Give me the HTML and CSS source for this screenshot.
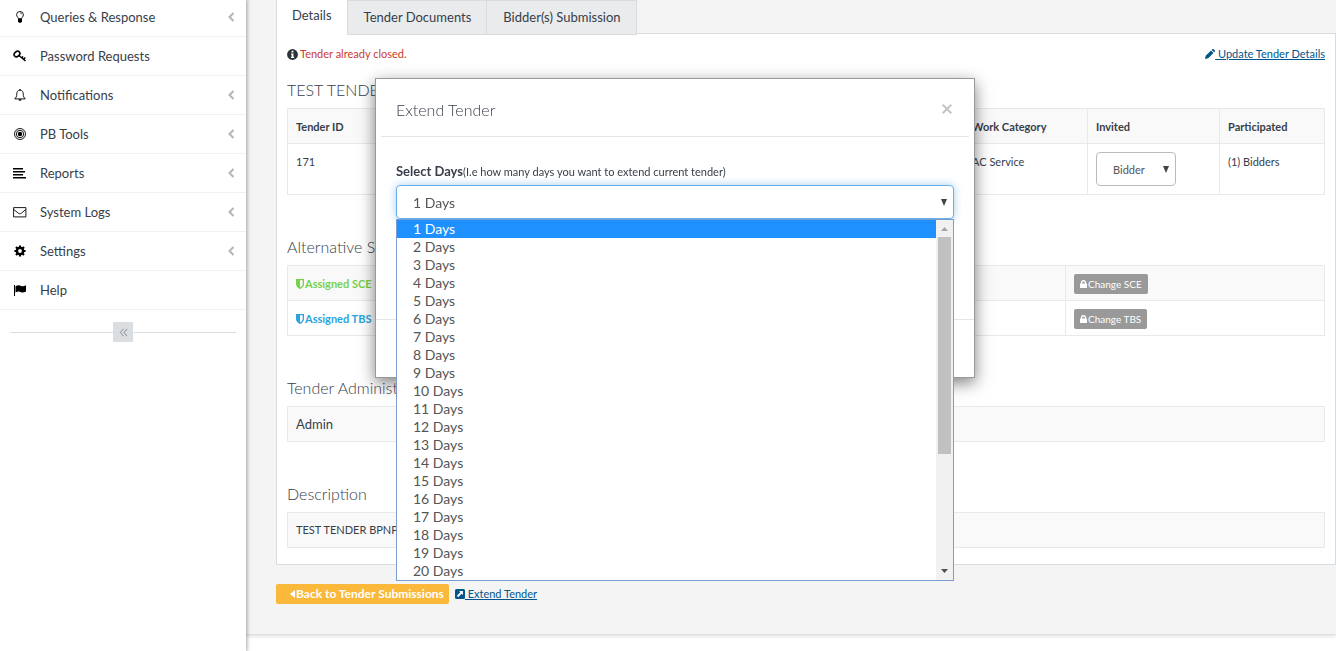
FILE: index.html
```html
<!DOCTYPE html>
<html lang="en">
<head>
<meta charset="utf-8">
<title>Tender Details</title>
<link rel="stylesheet" href="styles.css">
</head>
<body>
<div class="app">
  <nav class="sidebar" aria-label="Main">
    <ul class="menu">
      <li><a href="#"><svg class="menu-icon" viewBox="0 0 14 14"><path d="M5.300 8.600C5.300 7.400 3.600 6.700 3.600 4.700a3.400 3.200 0 0 1 6.800 0c0 2-1.700 2.700-1.700 3.900z" fill="none" stroke="#000" stroke-width=".9"/><path d="M5 9h4v2.600L8 12.800H6l-1-1.200z"/><path d="M7 3c1 0 1.700.5 1.700 1.300" fill="none" stroke="#000" stroke-width=".7"/></svg><span>Queries &amp; Response</span><svg class="chev" viewBox="0 0 8 10"><path d="M6.500 1L2.500 5l4 4"/></svg></a></li>
      <li><a href="#"><svg class="menu-icon" viewBox="0 0 14 14"><ellipse cx="4" cy="5" rx="3.100" ry="2.400" transform="rotate(-40 4 5)" fill="none" stroke="#000" stroke-width="1.600"/><path d="M6 6.500L12.500 12M10.600 10.400l1.700-1.900M8.800 8.900l1.300-1.500" fill="none" stroke="#000" stroke-width="1.500"/></svg><span>Password Requests</span></a></li>
      <li><a href="#"><svg class="menu-icon" viewBox="0 0 14 14"><path d="M7 2.200c-2.300 0-3.200 1.700-3.200 3.600C3.800 8.500 3 9.700 1.700 10.900h10.600C11 9.700 10.200 8.500 10.200 5.800c0-1.900-.9-3.600-3.200-3.600z" fill="none" stroke="#000" stroke-width=".9"/><path d="M6.400 1h1.200v1.200H6.400zM5.500 11.200h3a1.500 1.500 0 0 1-3 0z"/></svg><span>Notifications</span><svg class="chev" viewBox="0 0 8 10"><path d="M6.500 1L2.500 5l4 4"/></svg></a></li>
      <li><a href="#"><svg class="menu-icon" viewBox="0 0 14 14"><g fill="none" stroke="#000"><circle cx="7" cy="7" r="5.500" stroke-width=".9"/><circle cx="7" cy="7" r="3.700" stroke-width=".9"/></g><circle cx="7" cy="7" r="2.200"/></svg><span>PB Tools</span><svg class="chev" viewBox="0 0 8 10"><path d="M6.500 1L2.500 5l4 4"/></svg></a></li>
      <li><a href="#"><svg class="menu-icon" viewBox="0 0 14 14"><path d="M0 2h10v1.500H0zM0 5h12v1.500H0zM0 8h10v1.500H0zM0 11h13v1.500H0z"/></svg><span>Reports</span><svg class="chev" viewBox="0 0 8 10"><path d="M6.500 1L2.500 5l4 4"/></svg></a></li>
      <li><a href="#"><svg class="menu-icon" viewBox="0 0 14 14"><path d="M.6 2.600h12.300v9.300H.6zM.8 4.500l4.500 3.700c1 .8 2 .8 3 0l4.500-3.700" fill="none" stroke="#000" stroke-width=".9"/></svg><span>System Logs</span><svg class="chev" viewBox="0 0 8 10"><path d="M6.500 1L2.500 5l4 4"/></svg></a></li>
      <li><a href="#"><svg class="menu-icon" viewBox="0 0 14 14"><circle cx="7" cy="7" r="3.100" fill="none" stroke="#000" stroke-width="2.500"/><path d="M7 1.400v11.200M1.400 7h11.200M3 3l8 8M11 3l-8 8" stroke="#000" stroke-width="2.200"/><circle cx="7" cy="7" r="1.900" fill="#fff"/></svg><span>Settings</span><svg class="chev" viewBox="0 0 8 10"><path d="M6.500 1L2.500 5l4 4"/></svg></a></li>
      <li><a href="#"><svg class="menu-icon" viewBox="0 0 14 14"><path d="M1 2h1v11H1z"/><path d="M2.500 3.300c3-1.700 4.200-1 5.500-.4 1.500.7 3 .4 5-.6v6.300c-2 1-3.500 1.300-5 .6-1.300-.7-2.500-1.200-5.500.4z"/></svg><span>Help</span></a></li>
    </ul>
    <div class="collapse">
      <button type="button" aria-label="Collapse menu"><svg viewBox="0 0 10 10"><path d="M5 1L1.500 5 5 9M9 1L5.500 5 9 9"/></svg></button>
    </div>
  </nav>

  <main class="content">
    <div class="tabs">
      <a class="tab active" href="#">Details</a>
      <a class="tab" href="#">Tender Documents</a>
      <a class="tab" href="#">Bidder(s) Submission</a>
    </div>
    <section class="panel">
      <div class="notice-row">
        <p class="notice"><svg class="info" viewBox="0 0 12 12"><circle cx="6" cy="6" r="5.900" fill="#2c3338"/><path d="M5 2h2v1.700H5zM4.300 4.800H7v3.600h.8v1.300H4.300V8.400H5V6h-.7z" fill="#fff"/></svg>Tender already closed.</p>
        <a class="link" href="#"><svg class="small-icon" viewBox="0 0 10 10"><path d="M0 10l.7-3.200L6 1.500l2.500 2.500-5.300 5.300zM6.700.9L7.500.1c.3-.2.700-.2 1 0L9.900 1.500c.2.300.2.700 0 1l-.8.800z"/></svg> Update Tender Details</a>
      </div>
      <h4>TEST TENDER</h4>
      <table class="grid tender">
        <thead>
          <tr><th>Tender ID</th><th class="c-cat">Work Category</th><th class="c-inv">Invited</th><th class="c-part">Participated</th></tr>
        </thead>
        <tbody>
          <tr><td>171</td><td>AC Service</td><td class="pick"><select class="bidder" aria-label="Invited bidders"><option>Bidder</option></select></td><td>(1) Bidders</td></tr>
        </tbody>
      </table>
      <h4>Alternative SCE</h4>
      <table class="grid roles">
        <tbody>
          <tr class="shade"><td><strong class="sce"><svg class="shield" viewBox="0 0 8 10"><path fill-rule="evenodd" d="M0 0h8v5c0 2.500-2 4-4 5-2-1-4-2.500-4-5zM4 1.300v7.200c1.500-.9 2.700-2 2.700-3.500V1.300z"/></svg>Assigned SCE</strong></td><td class="c-act"><button class="change" type="button"><svg class="lock" viewBox="0 0 8 9"><path fill-rule="evenodd" d="M0 4h1V3a3 3 0 0 1 6 0v1h1v5H0zM2.500 4h3V3a1.500 1.500 0 0 0-3 0z"/></svg>Change SCE</button></td></tr>
          <tr><td><strong class="tbs"><svg class="shield" viewBox="0 0 8 10"><path fill-rule="evenodd" d="M0 0h8v5c0 2.500-2 4-4 5-2-1-4-2.500-4-5zM4 1.300v7.200c1.500-.9 2.700-2 2.700-3.500V1.300z"/></svg>Assigned TBS</strong></td><td class="c-act"><button class="change" type="button"><svg class="lock" viewBox="0 0 8 9"><path fill-rule="evenodd" d="M0 4h1V3a3 3 0 0 1 6 0v1h1v5H0zM2.500 4h3V3a1.500 1.500 0 0 0-3 0z"/></svg>Change TBS</button></td></tr>
        </tbody>
      </table>
      <h4>Tender Administrator</h4>
      <div class="box admin">Admin</div>
      <h4>Description</h4>
      <div class="box">TEST TENDER BPNP</div>
    </section>
    <div class="actions">
      <a class="back" href="#"><svg class="caret" viewBox="0 0 5 8"><path d="M5 0v8L0 4z"/></svg>Back to Tender Submissions</a>
      <a class="link" href="#"><svg class="small-icon" viewBox="0 0 10 10"><path fill-rule="evenodd" d="M1.500 0h7A1.500 1.500 0 0 1 10 1.500v7A1.500 1.500 0 0 1 8.500 10h-7A1.500 1.500 0 0 1 0 8.500v-7A1.500 1.500 0 0 1 1.500 0zM4 2l1.300 1.300L1.800 6.800l1.400 1.400 3.500-3.500L8 6V2z"/></svg> Extend Tender</a>
    </div>
  </main>
</div>

<div class="overlay">
  <div class="modal" role="dialog" aria-labelledby="modal-title">
    <header class="modal-head">
      <h3 id="modal-title">Extend Tender</h3>
      <button class="close" type="button" aria-label="Close"><svg viewBox="0 0 10 10"><path d="M.7.7l8.600 8.600M9.300.7L.7 9.300"/></svg></button>
    </header>
    <div class="modal-body">
      <label for="days"><strong>Select Days</strong>(I.e how many days you want to extend current tender)</label>
      <div class="dropdown">
        <select class="days" id="days"><option>1 Days</option></select>
        <div class="list">
          <ul role="listbox" aria-label="Days">
            <li class="selected" role="option" aria-selected="true">1 Days</li>
            <li role="option">2 Days</li>
            <li role="option">3 Days</li>
            <li role="option">4 Days</li>
            <li role="option">5 Days</li>
            <li role="option">6 Days</li>
            <li role="option">7 Days</li>
            <li role="option">8 Days</li>
            <li role="option">9 Days</li>
            <li role="option">10 Days</li>
            <li role="option">11 Days</li>
            <li role="option">12 Days</li>
            <li role="option">13 Days</li>
            <li role="option">14 Days</li>
            <li role="option">15 Days</li>
            <li role="option">16 Days</li>
            <li role="option">17 Days</li>
            <li role="option">18 Days</li>
            <li role="option">19 Days</li>
            <li role="option">20 Days</li>
          </ul>
          <div class="scroll" aria-hidden="true">
            <svg class="scroll-arrow" viewBox="0 0 7 4"><path d="M3.500 0L7 4H0z" fill="#a3a3a3"/></svg>
            <div class="thumb"></div>
            <svg class="scroll-arrow" viewBox="0 0 7 4"><path d="M0 0h7L3.500 4z" fill="#505050"/></svg>
          </div>
        </div>
      </div>
    </div>
    <footer class="modal-foot"></footer>
  </div>
</div>
</body>
</html>
```
FILE: styles.css
```css
* { box-sizing: border-box; }

body {
  margin: 0;
  overflow: hidden;
  background: #fff;
  color: #373e4a;
  font: 11px/16px Lato, "Open Sans", sans-serif;
}

h3, h4, p, ul { margin: 0; padding: 0; font-weight: 400; }
ul { list-style: none; }
svg { flex: none; fill: currentColor; }
button, select { font-family: inherit; }

.app { display: flex; min-height: 100vh; }

/* Sidebar */
.sidebar {
  position: relative;
  z-index: 1;
  flex: 0 0 246px;
  background: #fff;
  box-shadow: 0 0 4px 1px rgba(0, 0, 0, .35);
}
.menu { margin-top: -2px; }
.menu li { border-bottom: 1px solid #f1f1f1; }
.menu a {
  display: flex;
  align-items: center;
  height: 38px;
  padding: 0 11px 0 13px;
  color: #373e4a;
  font-size: 13px;
  text-decoration: none;
}
.menu span { flex: 1; }
.menu-icon { width: 14px; height: 14px; margin-right: 13px; fill: #000; }
.chev { width: 8px; height: 10px; fill: none; stroke: #b1b5ba; stroke-width: 2; }
.collapse {
  display: flex;
  align-items: center;
  margin: 12px 10px;
}
.collapse::before, .collapse::after { content: ""; flex: 1; height: 1px; background: #ddd; }
.collapse button {
  display: grid;
  place-items: center;
  width: 20px;
  height: 20px;
  padding: 0;
  border: 0;
  background: #dadee0;
}
.collapse svg { width: 9px; height: 9px; fill: none; stroke: #7c8288; stroke-width: 1; }

/* Content */
.content {
  flex: 1;
  align-self: flex-start;
  padding: 0 0 30px 30px;
  border-bottom: 1px solid #e1e1e1;
  background: #f4f4f4;
  box-shadow: 0 1px 4px rgba(0, 0, 0, .15);
}
.tabs { display: flex; position: relative; }
.tab {
  height: 35px;
  padding: 7px 15px 8px 16px;
  border: 1px solid #d9dcde;
  border-width: 1px 1px 1px 0;
  background: #e9ebec;
  color: #373e4a;
  font-size: 13px;
  line-height: 18px;
  text-decoration: none;
}
.tab.active { padding: 6px 15px 8px; border-width: 0 1px; background: #fff; }
.panel {
  margin-top: -2px;
  padding: 12px 10px 16px;
  border: 1px solid #d9dcde;
  background: #fff;
}
.notice-row { display: flex; justify-content: space-between; }
.notice { display: flex; align-items: center; gap: 2px; color: #cb3b29; }
.info { width: 11px; height: 11px; }
.link { color: #00568b; }
.small-icon { width: 10px; height: 10px; vertical-align: -1px; }

h4 { font-size: 16px; line-height: 20px; font-weight: 300; }
.notice-row + h4 { margin-top: 18px; }

.grid {
  width: 100%;
  margin: 8px 0 42px;
  border-collapse: collapse;
  table-layout: fixed;
  text-align: left;
}
.grid th, .grid td { padding: 10px 8px 8px; border: 1px solid #e9e9e9; vertical-align: top; }
.grid th { height: 35px; background: #f9f9f9; font-weight: 700; }
.grid .pick { padding: 8px; }
.c-cat { width: 124px; }
.c-inv { width: 132px; }
.c-part { width: 105px; }
.grid .c-act { width: 259px; padding: 8px 8px 6px; }
.shade { background: #f9f9f9; }
.sce, .tbs { display: flex; align-items: center; gap: 1px; }
.sce { color: #76d04b; }
.tbs { color: #2ba3dd; }
.shield { width: 8px; height: 10px; }
.change {
  display: flex;
  align-items: center;
  gap: 1px;
  height: 20px;
  padding: 0 6px;
  border: 0;
  border-radius: 2px;
  background: #999;
  color: #fff;
  font-size: 10px;
}
.lock { width: 7px; height: 8px; }

.box { margin: 8px 0 0; padding: 9px 8px; border: 1px solid #e9e9e9; background: #f9f9f9; }
.box.admin { margin-bottom: 42px; font-size: 13px; }

.bidder, .days {
  appearance: none;
  display: block;
  height: 34px;
  padding: 0 16px;
  border: 1px solid #bbb;
  border-radius: 4px;
  background: #fff url("data:image/svg+xml,%3Csvg xmlns='http://www.w3.org/2000/svg' width='6' height='7'%3E%3Cpath d='M0 0h6L3 7z' fill='%23444'/%3E%3C/svg%3E") no-repeat right 6px center;
  color: #555;
}
.bidder { width: 80px; font-size: 11px; }
.days {
  width: 100%;
  border-color: #66afe9;
  box-shadow: 0 0 8px rgba(102, 175, 233, .6);
  font-size: 14px;
}

.actions { display: flex; align-items: center; gap: 6px; margin-top: 19px; }
.back {
  display: flex;
  align-items: center;
  gap: 1px;
  height: 20px;
  padding: 0 5px 0 14px;
  border-radius: 2px;
  background: #fbb93b;
  color: #fff;
  font-size: 12px;
  font-weight: 700;
  text-decoration: none;
}
.caret { width: 5px; height: 8px; }

/* Dialog */
.overlay {
  position: fixed;
  inset: 0;
  z-index: 2;
  display: flex;
  justify-content: center;
  align-items: flex-start;
  padding: 78px 0 0 14px;
}
.modal {
  width: 600px;
  border: 1px solid #999;
  background: #fff;
  box-shadow: 0 5px 15px rgba(0, 0, 0, .5);
}
.modal-head {
  display: flex;
  justify-content: space-between;
  align-items: flex-start;
  margin: 0 5px;
  padding: 20px 16px 16px 15px;
  border-bottom: 1px solid #e5e5e5;
}
.modal-head h3 { font-size: 16px; line-height: 21px; font-weight: 300; }
.close { margin-top: 4px; width: 12px; height: 12px; padding: 1px; border: 0; background: none; }
.close svg { display: block; width: 10px; height: 10px; stroke: #c4c4c4; stroke-width: 2; }
.modal-body { padding: 25px 20px 100px; }
.modal-body label { display: block; line-height: 18px; margin-bottom: 4px; }
.modal-body strong { font-size: 13px; }
.dropdown { position: relative; }
.modal-foot { height: 58px; border-top: 1px solid #e5e5e5; }

.list {
  position: absolute;
  top: 100%;
  left: 0;
  right: 0;
  display: flex;
  border: 1px solid #7a9cd3;
  background: #fff;
}
.list ul { flex: 1; }
.list li { padding-left: 16px; color: #555; font-size: 14px; line-height: 18px; }
.list .selected { background: #1e90ff; color: #fff; }
.scroll {
  display: flex;
  flex-direction: column;
  align-items: center;
  width: 17px;
  padding: 7px 0;
  background: #f1f1f1;
}
.scroll-arrow { width: 7px; height: 4px; }
.thumb { width: 13px; height: 217px; margin: 6px 0 auto; background: #c1c1c1; }
```
